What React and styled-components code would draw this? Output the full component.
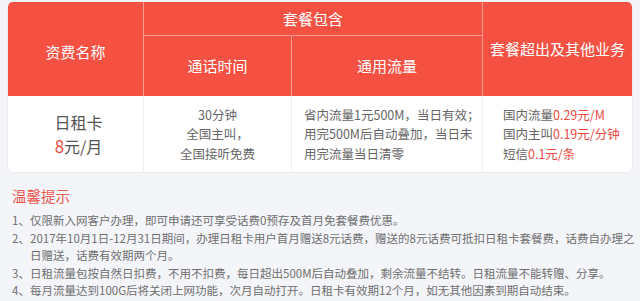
import React from "react";
import styled, { createGlobalStyle } from "styled-components";

const Global = createGlobalStyle`
  html, body { margin: 0; padding: 0; background: #f4f5f9; }
  body { font-family: "Noto Sans CJK SC", "Noto Sans", sans-serif; }
`;

const Page = styled.div`
  width: 640px;
  height: 301px;
  padding: 2px 8px 0 8px;
  box-sizing: border-box;
  overflow: hidden;
`;

const Table = styled.div`
  display: grid;
  grid-template-columns: 136px 148px 191px 149px;
  grid-template-rows: 34px 60px 76px;
  background: #fff;
  border-radius: 5px;
  overflow: hidden;
  box-shadow: 0 0 0 1px #ececef;
`;

const HeadCell = styled.div`
  grid-row: ${(p) => p.$row};
  grid-column: ${(p) => p.$col};
  background: #f45143;
  color: #fff;
  font-size: 15px;
  line-height: 20px;
  display: flex;
  align-items: center;
  justify-content: center;
  padding-top: ${(p) => p.$shift || 0}px;
  border-right: ${(p) => (p.$last ? "none" : "1px solid #f89a8f")};
  border-bottom: ${(p) => (p.$divide ? "1px solid #f89a8f" : "none")};
  box-sizing: border-box;
`;

const BodyCell = styled.div`
  grid-row: 3;
  display: flex;
  flex-direction: column;
  justify-content: center;
  align-items: ${(p) => (p.$align === "left" ? "flex-start" : "center")};
  padding: ${(p) => p.$pad || "0"};
  border-right: ${(p) => (p.$last ? "none" : "1px solid #ededed")};
  color: #666;
  font-size: 12.5px;
  line-height: 19.5px;
  box-sizing: border-box;
  white-space: nowrap;
`;

const NameLine = styled.div`
  font-size: 16px;
  line-height: 23px;
  color: #555;
`;

const Red = styled.span`
  color: #ec4a3f;
`;

const Big = styled.span`
  font-size: 17px;
  color: #ec4a3f;
`;

const Notes = styled.div`
  margin-top: 14px;
  padding-left: 4px;
`;

const NotesTitle = styled.div`
  color: #ec5a50;
  font-size: 14.5px;
  line-height: 20px;
  margin-bottom: 6px;
`;

const NoteRow = styled.div`
  display: flex;
  color: #6f6f6f;
  font-size: 11.5px;
  line-height: 17.5px;
  white-space: nowrap;
`;

const NoteNum = styled.span`
  width: 18px;
  flex: none;
`;

const NoteText = styled.span`
  display: flex;
  flex-direction: column;
`;

const notes = [
  ["1、", ["仅限新入网客户办理，即可申请还可享受话费0预存及首月免套餐费优惠。"]],
  [
    "2、",
    [
      "2017年10月1日-12月31日期间，办理日租卡用户首月赠送8元话费，赠送的8元话费可抵扣日租卡套餐费，话费自办理之",
      "日赠送，话费有效期两个月。",
    ],
  ],
  ["3、", ["日租流量包按自然日扣费，不用不扣费，每日超出500M后自动叠加，剩余流量不结转。日租流量不能转赠、分享。"]],
  ["4、", ["每月流量达到100G后将关闭上网功能，次月自动打开。日租卡有效期12个月，如无其他因素到期自动结束。"]],
];

export default function App() {
  return (
    <>
      <Global />
      <Page>
        <Table>
          <HeadCell $row="1 / 3" $col="1" $shift={6}>资费名称</HeadCell>
          <HeadCell $row="1" $col="2 / 4" $divide>套餐包含</HeadCell>
          <HeadCell $row="1 / 3" $col="4" $last>套餐超出及其他业务</HeadCell>
          <HeadCell $row="2" $col="2">通话时间</HeadCell>
          <HeadCell $row="2" $col="3">通用流量</HeadCell>

          <BodyCell $pad="0 0 0 6px">
            <NameLine>日租卡</NameLine>
            <NameLine>
              <Big>8</Big>元/月
            </NameLine>
          </BodyCell>
          <BodyCell>
            <div>30分钟</div>
            <div>全国主叫，</div>
            <div>全国接听免费</div>
          </BodyCell>
          <BodyCell $align="left" $pad="0 0 0 12px">
            <div>省内流量1元500M，当日有效；</div>
            <div>用完500M后自动叠加，当日未</div>
            <div>用完流量当日清零</div>
          </BodyCell>
          <BodyCell $align="left" $pad="0 0 0 20px" $last>
            <div>
              国内流量<Red>0.29元/M</Red>
            </div>
            <div>
              国内主叫<Red>0.19元/分钟</Red>
            </div>
            <div>
              短信<Red>0.1元/条</Red>
            </div>
          </BodyCell>
        </Table>

        <Notes>
          <NotesTitle>温馨提示</NotesTitle>
          {notes.map(([n, lines]) => (
            <NoteRow key={n}>
              <NoteNum>{n}</NoteNum>
              <NoteText>
                {lines.map((l) => (
                  <span key={l}>{l}</span>
                ))}
              </NoteText>
            </NoteRow>
          ))}
        </Notes>
      </Page>
    </>
  );
}
